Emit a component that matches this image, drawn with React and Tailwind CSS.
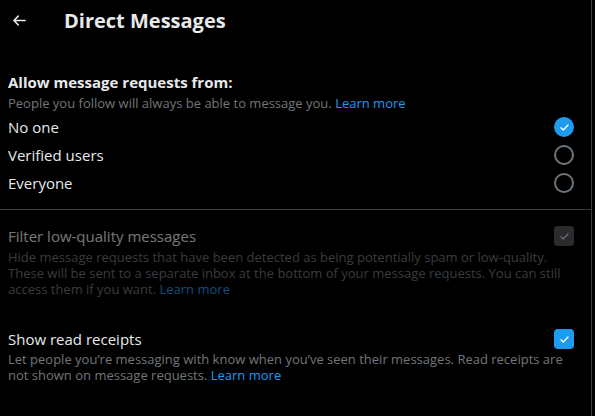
import React, { useState } from 'react';

const font = { fontFamily: '"Open Sans", "Noto Sans", Arial, sans-serif' };

const CheckIcon = ({ className }) => (
  <svg viewBox="0 0 24 24" className={className} fill="none" stroke="currentColor" strokeWidth={2.4} strokeLinecap="round" strokeLinejoin="round">
    <path d="M5.5 12.5l4.2 4.2L18.5 7.5" />
  </svg>
);

const Radio = ({ checked }) =>
  checked ? (
    <div className="w-5 h-5 rounded-full bg-[#1d9bf0] flex items-center justify-center text-white">
      <CheckIcon className="w-[13px] h-[13px]" />
    </div>
  ) : (
    <div className="w-5 h-5 rounded-full border-2 border-[#6e767d]" />
  );

const Checkbox = ({ checked, disabled }) => (
  <div
    className={`w-5 h-5 rounded-[4px] flex items-center justify-center ${
      disabled ? 'bg-[#2a2b2d] text-[#6b6e71]' : checked ? 'bg-[#1d9bf0] text-white' : 'border-2 border-[#6e767d]'
    }`}
  >
    {checked && <CheckIcon className="w-[13px] h-[13px]" />}
  </div>
);

export default function App() {
  const [who, setWho] = useState('none');
  const [receipts, setReceipts] = useState(true);

  const options = [
    { id: 'none', label: 'No one' },
    { id: 'verified', label: 'Verified users' },
    { id: 'everyone', label: 'Everyone' },
  ];

  return (
    <div className="w-[595px] h-[416px] bg-black flex" style={font}>
      <div className="w-[592px] border-r border-[#3a3d40] flex flex-col">
        {/* Header */}
        <div className="h-[40px] flex items-center pl-3">
          <svg viewBox="0 0 24 24" className="w-[15px] h-[15px] text-[#e7e9ea]" fill="none" stroke="currentColor" strokeWidth={2.4} strokeLinecap="round" strokeLinejoin="round">
            <path d="M21 12H3M10 5l-7 7 7 7" />
          </svg>
          <h1 className="ml-[37px] text-[20px] font-bold text-[#e7e9ea] leading-6 mt-[1px]">Direct Messages</h1>
        </div>

        {/* Message requests */}
        <div className="pl-2 pr-[17px] pt-[32px]">
          <div className="text-[15px] font-bold text-[#e7e9ea] leading-5">Allow message requests from:</div>
          <div className="text-[13px] text-[#71767b] leading-4 mt-[3px]">
            People you follow will always be able to message you. <span className="text-[#1d9bf0]">Learn more</span>
          </div>
          <div className="mt-[2px] flex flex-col">
            {options.map((o) => (
              <div key={o.id} className="h-[28px] flex items-center justify-between" onClick={() => setWho(o.id)}>
                <span className="text-[15px] text-[#e7e9ea]">{o.label}</span>
                <Radio checked={who === o.id} />
              </div>
            ))}
          </div>
        </div>

        <div className="mt-[12px] h-px bg-[#3a3d40]" />

        {/* Filter low-quality */}
        <div className="pl-2 pr-[17px] pt-[16px]">
          <div className="flex items-center justify-between h-[20px]">
            <span className="text-[15px] text-[#e7e9ea] opacity-50">Filter low-quality messages</span>
            <Checkbox checked disabled />
          </div>
          <div className="text-[13px] text-[#71767b] leading-4 mt-[3px] opacity-50">
            Hide message requests that have been detected as being potentially spam or low-quality. These will be sent to a separate inbox at the bottom of your message requests. You can still access them if you want.{' '}
            <span className="text-[#1d9bf0]">Learn more</span>
          </div>
        </div>

        {/* Read receipts */}
        <div className="pl-2 pr-[17px] pt-[32px]">
          <div className="flex items-center justify-between h-[20px]" onClick={() => setReceipts(!receipts)}>
            <span className="text-[15px] text-[#e7e9ea]">Show read receipts</span>
            <Checkbox checked={receipts} />
          </div>
          <div className="text-[13px] text-[#71767b] leading-4 mt-[2px]">
            Let people you’re messaging with know when you’ve seen their messages. Read receipts are not shown on message requests.{' '}
            <span className="text-[#1d9bf0]">Learn more</span>
          </div>
        </div>
      </div>
      <div className="w-[3px]" />
    </div>
  );
}
